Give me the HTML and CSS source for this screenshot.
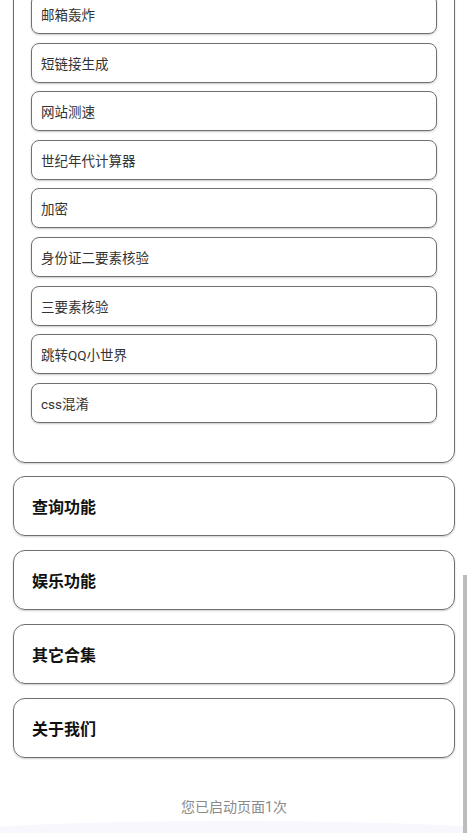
FILE: index.html
```html
<!DOCTYPE html>
<html lang="zh">
<head>
<meta charset="utf-8">
<title>工具箱</title>
<link rel="stylesheet" href="styles.css">
</head>
<body>
<main class="page">
  <section class="group">
    <div class="item">邮箱轰炸</div>
    <div class="item">短链接生成</div>
    <div class="item">网站测速</div>
    <div class="item">世纪年代计算器</div>
    <div class="item">加密</div>
    <div class="item">身份证二要素核验</div>
    <div class="item">三要素核验</div>
    <div class="item">跳转QQ小世界</div>
    <div class="item">css混淆</div>
  </section>
  <section class="card">查询功能</section>
  <section class="card">娱乐功能</section>
  <section class="card">其它合集</section>
  <section class="card">关于我们</section>
  <footer class="footer">您已启动页面1次</footer>
</main>
<div class="bottom-band"></div>
<div class="scroll-thumb"></div>
</body>
</html>
```
FILE: styles.css
```css
html, body {
  margin: 0;
  padding: 0;
  background: #ffffff;
  overflow: hidden;
  height: 833px;
}
body {
  font-family: Roboto, "Noto Sans CJK SC", sans-serif;
  color: #222;
}
.page {
  margin-top: -23px;
  padding: 0 13px;
  display: flex;
  flex-direction: column;
  gap: 13.7px;
}
.group {
  border: 1px solid #6f6f6f;
  border-radius: 12px;
  box-shadow: 0 1px 2px rgba(0,0,0,0.2);
  padding: 16px 17px 39px;
  display: flex;
  flex-direction: column;
  gap: 8.6px;
}
.item {
  box-sizing: border-box;
  height: 40px;
  border: 1px solid #707070;
  border-radius: 8px;
  box-shadow: 0 1px 2px rgba(0,0,0,0.22);
  padding: 0 9px;
  display: flex;
  align-items: center;
  font-size: 13.5px;
  color: #333;
}
.card {
  box-sizing: border-box;
  height: 60px;
  border: 1px solid #6f6f6f;
  border-radius: 12px;
  box-shadow: 0 1px 2px rgba(0,0,0,0.2);
  padding: 0 18px;
  display: flex;
  align-items: center;
  font-size: 16px;
  font-weight: 700;
  color: #111;
}
.footer {
  margin-top: 26px;
  text-align: center;
  font-size: 14px;
  line-height: 20px;
  color: #8a8a8a;
}
.bottom-band {
  position: fixed;
  left: -40px;
  right: -40px;
  bottom: 0;
  height: 12px;
  background: #f8f7fe;
  border-radius: 50% 50% 0 0 / 100% 100% 0 0;
}
.scroll-thumb {
  position: fixed;
  right: 1px;
  top: 575px;
  bottom: 0;
  width: 4px;
  background: #bdbdbd;
}
```
